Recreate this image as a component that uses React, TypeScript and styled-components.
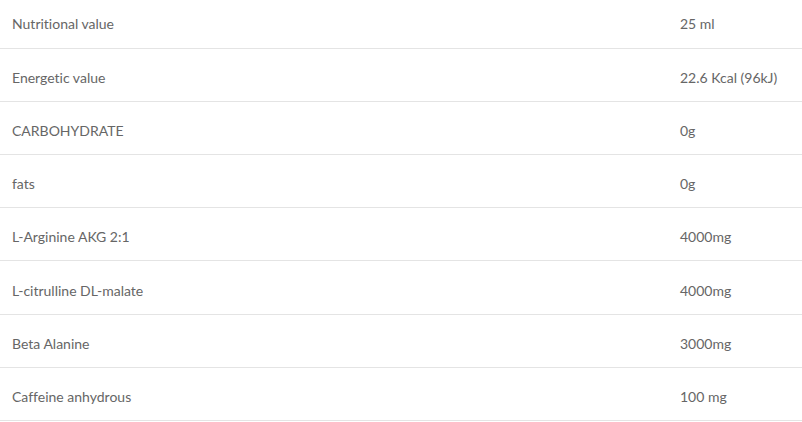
import React from "react";
import styled, { createGlobalStyle } from "styled-components";

const GlobalStyle = createGlobalStyle`
  html, body {
    margin: 0;
    padding: 0;
    background: #ffffff;
    overflow: hidden;
  }
`;

const Table = styled.table`
  width: 802px;
  margin-top: -5px;
  border-collapse: collapse;
  font-family: Lato, "Open Sans", sans-serif;
  font-size: 14px;
  font-variant-ligatures: none;
  color: #666666;
`;

const Row = styled.tr`
  height: 53.2px;
  border-bottom: 1px solid #e4e4e4;
`;

const Cell = styled.td<{ $wide?: boolean }>`
  padding: 5px 0 0 12px;
  width: ${({ $wide }) => ($wide ? "656px" : "auto")};
  vertical-align: middle;
`;

const rows: [string, string][] = [
  ["Nutritional value", "25 ml"],
  ["Energetic value", "22.6 Kcal (96kJ)"],
  ["CARBOHYDRATE", "0g"],
  ["fats", "0g"],
  ["L-Arginine AKG 2:1", "4000mg"],
  ["L-citrulline DL-malate", "4000mg"],
  ["Beta Alanine", "3000mg"],
  ["Caffeine anhydrous", "100 mg"],
];

export default function App() {
  return (
    <>
      <GlobalStyle />
      <Table>
        <tbody>
          {rows.map(([name, value]) => (
            <Row key={name}>
              <Cell $wide>{name}</Cell>
              <Cell>{value}</Cell>
            </Row>
          ))}
        </tbody>
      </Table>
    </>
  );
}
